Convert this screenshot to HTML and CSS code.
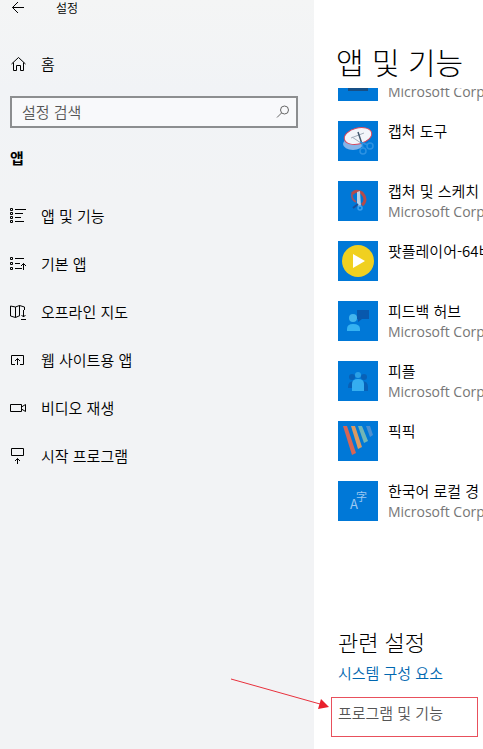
FILE: index.html
```html
<!DOCTYPE html>
<html lang="ko">
<head>
    <meta charset="UTF-8">
    <meta name="viewport" content="width=device-width, initial-scale=1.0">
    <title>설정</title>
    <link rel="stylesheet" href="styles.css">
</head>
<body>
    <div class="window">
        <!-- Side menu -->
        <aside class="sidebar">
            <header class="titlebar">
                <button class="back" type="button" aria-label="뒤로">
                    <svg width="14" height="14" viewBox="0 0 14 14"><path d="M13 6.500H1.500M7 1L1.500 6.500L7 12"/></svg>
                </button>
                <span>설정</span>
            </header>

            <a class="item" href="#home">
                <svg width="16" height="16" viewBox="0 0 16 16"><path d="M1.500 8L8.500 1.500L15.500 8M3.500 6.500V14.500H6.500V9.500H10.500V14.500H13.500V6.500"/></svg>
                홈
            </a>

            <div class="search">
                <input type="text" placeholder="설정 검색" aria-label="설정 검색">
                <svg width="14" height="14" viewBox="0 0 14 14"><circle cx="8.5" cy="5" r="4"/><path d="M5.5 8L1 12.5"/></svg>
            </div>

            <h2>앱</h2>

            <nav>
                <a class="item" href="#apps">
                    <svg width="16" height="16" viewBox="0 0 16 16"><path d="M.5 .5h2v2h-2zM.5 4.500h2v2h-2zM.5 8.500h2v2h-2zM.5 12.500h2v2h-2zM5 1.500H16M5 5.500H13M5 9.500H11M5 13.500H14"/></svg>
                    앱 및 기능
                </a>
                <a class="item" href="#default">
                    <svg width="16" height="16" viewBox="0 0 16 16"><path d="M.5 1.500h2v2h-2zM.5 6.500h2v2h-2zM.5 11.500h2v2h-2zM5 2.500H14M5 7.500H10M5 12.500H12M13.500 14V7.500M11 10L13.500 7.500L16 10"/></svg>
                    기본 앱
                </a>
                <a class="item" href="#maps">
                    <svg width="16" height="16" viewBox="0 0 16 16"><path d="M10 11.5L5.500 13.500L.5 12V2L5.500 3L9.500 1.500L14.500 3V6M5.500 3V13.500M9.500 1.500V11.500M13.500 6V13M11.500 11L13.500 13L15.500 11M11 15.500H16"/></svg>
                    오프라인 지도
                </a>
                <a class="item" href="#web">
                    <svg width="16" height="16" viewBox="0 0 16 16"><path d="M5 12.500H1.500V3.500H13.500V12.500H10M7.500 13V6.500M5 9L7.500 6.500L10 9"/></svg>
                    웹 사이트용 앱
                </a>
                <a class="item" href="#video">
                    <svg width="16" height="16" viewBox="0 0 16 16"><path d="M.5 4.500H11.500V11.500H.5zM11.500 7L15.500 4.500V11.500L11.500 9"/></svg>
                    비디오 재생
                </a>
                <a class="item" href="#startup">
                    <svg width="16" height="16" viewBox="0 0 16 16"><path d="M1.500 .5H13.500V7.500H1.500zM7.500 16V10.500M5 13L7.500 10.500L10 13"/></svg>
                    시작 프로그램
                </a>
            </nav>
        </aside>

        <!-- Installed apps -->
        <main class="content">
            <h1>앱 및 기능</h1>

            <div class="viewport">
                <ul class="apps">
                    <li>
                        <svg class="tile" viewBox="0 0 40 40"><path d="M10 26h20v4H10z" fill="#174f86"/></svg>
                        <div class="scrolled"><p class="vendor">Microsoft Corp</p></div>
                    </li>
                    <li>
                        <svg class="tile" viewBox="0 0 40 40">
                            <ellipse cx="15" cy="23" rx="10" ry="6" fill="#86b4e8"/>
                            <ellipse cx="20" cy="15" rx="14" ry="8" transform="rotate(-14 20 15)" fill="#f3f5fa" stroke="#d5475d"/>
                            <path d="M13 17L26 12M14 16L23 22" stroke="#a3adba" fill="none"/>
                            <path d="M20 11L24 23" stroke="#44586e" stroke-width="1.500"/>
                            <g fill="none" stroke="#2c92e2" stroke-width="1.500"><circle cx="25" cy="30" r="3"/><circle cx="32" cy="25" r="3"/><path d="M22 21L30 24M24 22L25 27"/></g>
                        </svg>
                        <div><p>캡처 도구</p></div>
                    </li>
                    <li>
                        <svg class="tile" viewBox="0 0 40 40">
                            <path d="M14 13Q18 8 24 12Q30 19 24 24" fill="none" stroke="#b54b4a" stroke-width="3"/>
                            <path d="M14 13Q13 18 18 21" fill="none" stroke="#9b5367" stroke-width="2"/>
                            <path d="M19 11L22 10L23 26L19 24Z" fill="#b9d2e8"/>
                            <path d="M15 27L20 23" stroke="#174f9c" stroke-width="2"/>
                            <circle cx="22" cy="27" r="2" fill="none" stroke="#3aa0ef" stroke-width="1.500"/>
                        </svg>
                        <div><p>캡처 및 스케치</p><p class="vendor">Microsoft Corp</p></div>
                    </li>
                    <li>
                        <svg class="tile" viewBox="0 0 40 40"><circle cx="20" cy="20" r="16" fill="#f0d020"/><path d="M15 13L27 20L15 27Z" fill="#fff"/></svg>
                        <div><p>팟플레이어-64비</p></div>
                    </li>
                    <li>
                        <svg class="tile" viewBox="0 0 40 40">
                            <path d="M19 9H31V18H24L20 21V18H19Z" fill="#0858ad"/>
                            <circle cx="15" cy="17" r="4" fill="#43b5ee"/>
                            <path d="M9 30V28Q9 23 15 23Q22 23 22 28V30Z" fill="#35b2f2"/>
                        </svg>
                        <div><p>피드백 허브</p><p class="vendor">Microsoft Corp</p></div>
                    </li>
                    <li>
                        <svg class="tile" viewBox="0 0 40 40">
                            <g fill="#0861b7"><circle cx="14" cy="16" r="3"/><circle cx="26" cy="16" r="3"/><path d="M10 26Q10 20 16 20V27H10ZM24 20Q30 20 30 26V30H24Z"/></g>
                            <circle cx="20" cy="14" r="3" fill="#2ba0e6"/>
                            <path d="M14 30V23Q14 18 20 18Q26 18 26 23V30Z" fill="#35aef0"/>
                        </svg>
                        <div><p>피플</p><p class="vendor">Microsoft Corp</p></div>
                    </li>
                    <li>
                        <svg class="tile" viewBox="0 0 40 40">
                            <path d="M5 5H9L18 32L14 34Z" fill="#d76654"/>
                            <path d="M13 5H17L24 26L20 28Z" fill="#d99a62"/>
                            <path d="M20 5H24L30 20L26 22Z" fill="#72b5b5"/>
                            <path d="M28 5H32L35 14L32 16Z" fill="#4c8fd0"/>
                        </svg>
                        <div><p>픽픽</p></div>
                    </li>
                    <li>
                        <svg class="tile" viewBox="0 0 40 40" fill="#9cc8f1" font-weight="400"><text x="12" y="28" font-size="13">A</text><text x="18" y="20" font-size="11">字</text></svg>
                        <div><p>한국어 로컬 경</p><p class="vendor">Microsoft Corp</p></div>
                    </li>
                </ul>
            </div>

            <section class="related">
                <h3>관련 설정</h3>
                <a class="link" href="#components">시스템 구성 요소</a>
                <div class="highlight">
                    <a href="#programs">프로그램 및 기능</a>
                    <svg class="arrow" width="100" height="32" viewBox="0 0 100 32"><path d="M1 1L90 26" stroke="#e8303c"/><path d="M99 29L88 31L91 21Z" fill="#e8202c"/></svg>
                </div>
            </section>
        </main>
    </div>
</body>
</html>
```

FILE: styles.css
```css
* {
    box-sizing: border-box;
}
body {
    margin: 0;
    font-family: "Noto Sans CJK KR", sans-serif;
    font-size: 15px;
    font-weight: 350;
    line-height: 20px;
    color: #000;
    background-color: #fff;
    overflow: hidden;
}
h1, h2, h3, p, ul {
    margin: 0;
    padding: 0;
}
a {
    color: inherit;
    text-decoration: none;
}
.window {
    display: flex;
    min-height: 100vh;
}

/* Side menu */
.sidebar {
    width: 65%;
    padding: 0 16px 0 10px;
    background: linear-gradient(#f4f5f5, #f1f3f6 90px, #f2f3f5 200px, #f2f3f5);
}
.sidebar svg {
    fill: none;
    stroke: #000;
    flex: none;
}
.titlebar {
    display: flex;
    align-items: center;
    gap: 31px;
    height: 16px;
    font-size: 12px;
    margin-bottom: 24px;
}
.back {
    display: flex;
    padding: 0 0 0 1px;
    border: none;
    background: none;
}
.item {
    display: flex;
    align-items: center;
    gap: 15px;
    height: 48px;
}
.search {
    display: flex;
    align-items: center;
    height: 32px;
    margin-top: 8px;
    padding: 0 6px 0 10px;
    border: 2px solid #8c8e90;
    background-color: #f8f9fb;
}
.search input {
    flex: 1;
    min-width: 0;
    padding: 0;
    border: none;
    outline: none;
    background: none;
    font: inherit;
}
.search input::placeholder {
    color: #555;
    opacity: 1;
}
.search svg {
    stroke: #666;
}
.sidebar h2 {
    margin: 18px 0 22px;
    font-size: 15px;
    line-height: 24px;
    font-weight: 700;
}

/* Installed apps */
.content {
    flex: 1;
    min-width: 0;
    padding: 40px 0 0 24px;
}
h1 {
    height: 48px;
    margin-left: -2px;
    font-size: 30px;
    line-height: 42px;
    font-weight: 300;
}
.viewport {
    overflow: hidden;
}
.apps {
    margin-top: -27px;
    list-style: none;
}
.apps li {
    display: flex;
    gap: 10px;
    height: 60px;
    white-space: nowrap;
}
.tile {
    flex: none;
    width: 40px;
    height: 40px;
    background-color: #0078d7;
}
.vendor {
    font-family: "Open Sans", sans-serif;
    font-size: 14px;
    font-weight: 400;
    line-height: 22px;
    color: #777;
}
.scrolled {
    padding-top: 20px;
}

/* Related settings */
.related {
    padding: 88px 5px 0 0;
}
.related h3 {
    font-size: 22px;
    line-height: 24px;
    font-weight: 300;
}
.link {
    display: block;
    margin-top: 10px;
    color: #0067b0;
}
.highlight {
    position: relative;
    height: 40px;
    margin: 14px 0 0 -7px;
    padding: 5px 6px;
    border: 1px solid #e8505c;
    color: #555;
}
.arrow {
    position: absolute;
    top: -20px;
    right: 147px;
    fill: none;
}
```
